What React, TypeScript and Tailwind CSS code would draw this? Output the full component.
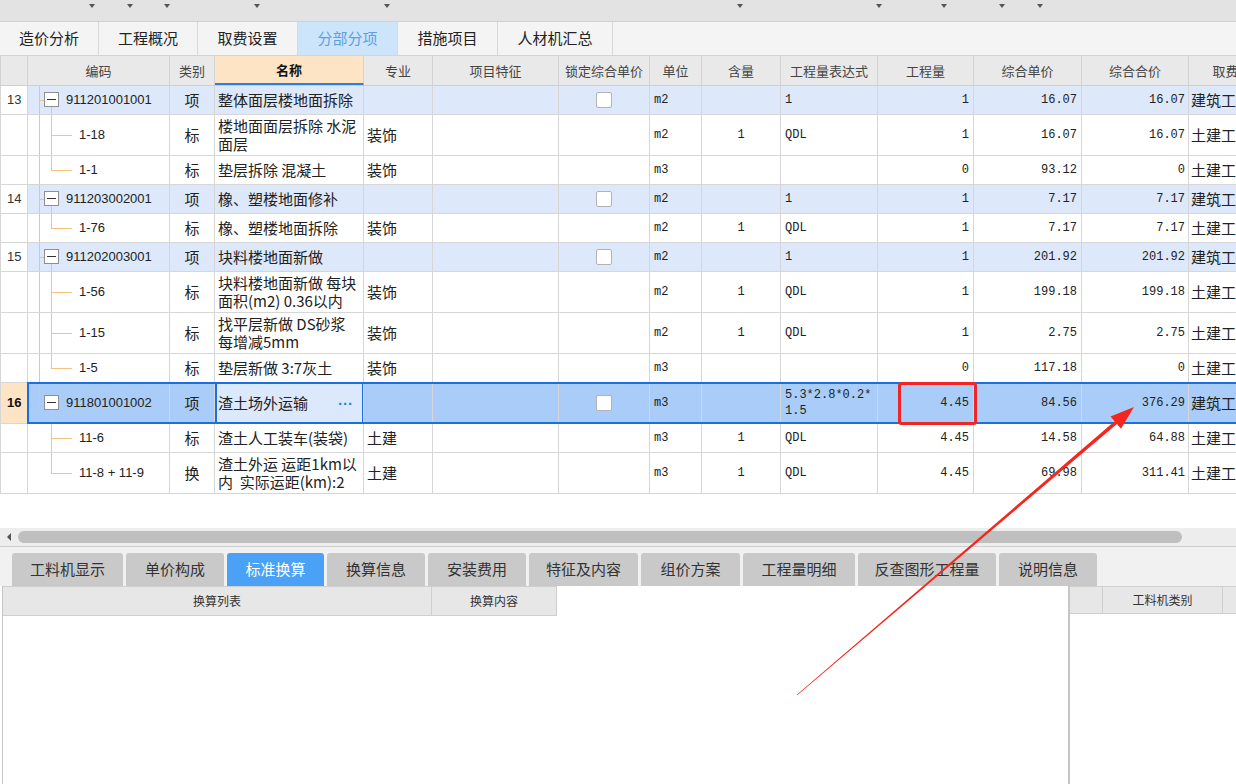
import React from "react";

type Row = {
  num?: string;
  code: string;
  kind: string;
  name: string[];
  spec?: string;
  unit: string;
  qty?: string;
  expr?: string[];
  amt: string;
  price: string;
  total: string;
  fee: string;
  parent?: boolean;
  selected?: boolean;
  tall?: boolean;
  last?: boolean;
  noTrunk?: boolean;
};

const rows: Row[] = [
  { num: "13", code: "911201001001", kind: "项", name: ["整体面层楼地面拆除"], unit: "m2", expr: ["1"], amt: "1", price: "16.07", total: "16.07", fee: "建筑工程", parent: true },
  { code: "1-18", kind: "标", name: ["楼地面面层拆除 水泥", "面层"], spec: "装饰", unit: "m2", qty: "1", expr: ["QDL"], amt: "1", price: "16.07", total: "16.07", fee: "土建工程", tall: true },
  { code: "1-1", kind: "标", name: ["垫层拆除 混凝土"], spec: "装饰", unit: "m3", amt: "0", price: "93.12", total: "0", fee: "土建工程", last: true },
  { num: "14", code: "911203002001", kind: "项", name: ["橡、塑楼地面修补"], unit: "m2", expr: ["1"], amt: "1", price: "7.17", total: "7.17", fee: "建筑工程", parent: true },
  { code: "1-76", kind: "标", name: ["橡、塑楼地面拆除"], spec: "装饰", unit: "m2", qty: "1", expr: ["QDL"], amt: "1", price: "7.17", total: "7.17", fee: "土建工程", last: true },
  { num: "15", code: "911202003001", kind: "项", name: ["块料楼地面新做"], unit: "m2", expr: ["1"], amt: "1", price: "201.92", total: "201.92", fee: "建筑工程", parent: true },
  { code: "1-56", kind: "标", name: ["块料楼地面新做 每块", "面积(m2) 0.36以内"], spec: "装饰", unit: "m2", qty: "1", expr: ["QDL"], amt: "1", price: "199.18", total: "199.18", fee: "土建工程", tall: true },
  { code: "1-15", kind: "标", name: ["找平层新做 DS砂浆", "每增减5mm"], spec: "装饰", unit: "m2", qty: "1", expr: ["QDL"], amt: "1", price: "2.75", total: "2.75", fee: "土建工程", tall: true },
  { code: "1-5", kind: "标", name: ["垫层新做 3:7灰土"], spec: "装饰", unit: "m3", amt: "0", price: "117.18", total: "0", fee: "土建工程", last: true },
  { num: "16", code: "911801001002", kind: "项", name: ["渣土场外运输"], unit: "m3", expr: ["5.3*2.8*0.2*", "1.5"], amt: "4.45", price: "84.56", total: "376.29", fee: "建筑工程", parent: true, selected: true, tall: true },
  { code: "11-6", kind: "标", name: ["渣土人工装车(装袋)"], spec: "土建", unit: "m3", qty: "1", expr: ["QDL"], amt: "4.45", price: "14.58", total: "64.88", fee: "土建工程", noTrunk: true },
  { code: "11-8 + 11-9", kind: "换", name: ["渣土外运 运距1km以", "内  实际运距(km):2"], spec: "土建", unit: "m3", qty: "1", expr: ["QDL"], amt: "4.45", price: "69.98", total: "311.41", fee: "土建工程", tall: true, last: true, noTrunk: true },
];

const headers: [string, string][] = [
  ["w-[28px]", ""],
  ["w-[142px]", "编码"],
  ["w-[45px]", "类别"],
  ["w-[149px]", "名称"],
  ["w-[69px]", "专业"],
  ["w-[126px]", "项目特征"],
  ["w-[91px]", "锁定综合单价"],
  ["w-[52px]", "单位"],
  ["w-[79px]", "含量"],
  ["w-[97px]", "工程量表达式"],
  ["w-[96px]", "工程量"],
  ["w-[108px]", "综合单价"],
  ["w-[107px]", "综合合价"],
  ["w-[100px]", "取费专业"],
];

const topTabs = [
  ["w-[99px]", "造价分析"],
  ["w-[99px]", "工程概况"],
  ["w-[100px]", "取费设置"],
  ["w-[100px]", "分部分项"],
  ["w-[100px]", "措施项目"],
  ["w-[115px]", "人材机汇总"],
];

const bottomTabs = [
  ["w-[111px]", "工料机显示"],
  ["w-[98px]", "单价构成"],
  ["w-[97px]", "标准换算"],
  ["w-[98px]", "换算信息"],
  ["w-[98px]", "安装费用"],
  ["w-[109px]", "特征及内容"],
  ["w-[99px]", "组价方案"],
  ["w-[112px]", "工程量明细"],
  ["w-[138px]", "反查图形工程量"],
  ["w-[98px]", "说明信息"],
];

const mono = "font-['Liberation_Mono','Noto_Sans_CJK_SC',monospace] text-[12px]";
const line = "bg-[#f5c381]";

const Cell = ({ w, className = "", children }: { w: string; className?: string; children?: React.ReactNode }) => (
  <div className={`${w} shrink-0 h-full border-r border-[#d6d6d6] flex items-center overflow-hidden whitespace-nowrap ${className}`}>
    {children}
  </div>
);

function CodeCell({ r, bg }: { r: Row; bg: string }) {
  return (
    <div className={`relative w-[142px] shrink-0 h-full border-r border-[#d6d6d6] flex items-center ${bg} ${r.parent ? "pl-[38px]" : "pl-[51px]"} font-['Liberation_Sans',sans-serif] text-[13px] text-[#222] whitespace-pre`}>
      {!r.noTrunk && !r.selected && <div className={`absolute left-[11px] top-0 bottom-0 w-px ${line}`} />}
      {r.selected && <div className={`absolute left-[11px] top-0 h-1/2 w-px ${line}`} />}
      {r.parent ? (
        <>
          <div className={`absolute left-[11px] top-1/2 w-[5px] h-px ${line}`} />
          <div className={`absolute left-[23px] top-1/2 bottom-0 w-px ${line}`} />
          <div className="absolute left-[16px] top-1/2 -mt-[8px] w-[15px] h-[15px] border border-[#8f8f8f] bg-white flex items-center justify-center">
            <div className="w-[9px] h-px bg-[#333]" />
          </div>
        </>
      ) : (
        <>
          <div className={`absolute left-[23px] top-0 w-px ${line} ${r.last ? "h-1/2" : "bottom-0"}`} />
          <div className={`absolute left-[23px] top-1/2 w-[21px] h-px ${line}`} />
        </>
      )}
      <span>{r.code}</span>
    </div>
  );
}

function TableRow({ r }: { r: Row }) {
  const bg = r.selected ? "bg-[#a9cdf8]" : r.parent ? "bg-[#dde9fb]" : "bg-white";
  const h = r.tall ? "h-[41px]" : "h-[29px]";
  const cn = "font-['Noto_Sans_CJK_SC',sans-serif] text-[15px] text-[#222]";
  return (
    <div className={`relative flex ${h} border-b border-[#d6d6d6]`}>
      <Cell w="w-[28px]" className={`border-l pl-[6px] font-['Liberation_Sans',sans-serif] text-[13px] ${r.selected ? "bg-[#fde4c4] font-bold text-[#111]" : "bg-white text-[#333]"}`}>
        {r.num}
      </Cell>
      <CodeCell r={r} bg={bg} />
      <Cell w="w-[45px]" className={`${bg} ${cn} justify-center`}>{r.kind}</Cell>
      <Cell w="w-[149px]" className={`relative ${r.selected ? "bg-[#dce9fc]" : bg} ${cn} pl-[3px]`}>
        <div className="flex flex-col leading-[18px]">
          {r.name.map((t, i) => (
            <span key={i} className="whitespace-pre">{t}</span>
          ))}
        </div>
        {r.selected && (
          <>
            <span className="ml-auto mr-[10px] font-['Liberation_Sans',sans-serif] text-[#2f7fe0] text-[15px] font-bold leading-none">···</span>
            <div className="absolute -top-px -bottom-px left-0 right-[-1px] border-2 border-[#1c6fe3] pointer-events-none" />
          </>
        )}
      </Cell>
      <Cell w="w-[69px]" className={`${bg} ${cn} pl-[3px]`}>{r.spec}</Cell>
      <Cell w="w-[126px]" className={bg} />
      <Cell w="w-[91px]" className={`${bg} justify-center`}>
        {r.parent && <div className="w-[16px] h-[16px] rounded-[2px] border border-[#b3b3b3] bg-white" />}
      </Cell>
      <Cell w="w-[52px]" className={`${bg} ${mono} pl-[4px] text-[#222]`}>{r.unit}</Cell>
      <Cell w="w-[79px]" className={`${bg} ${mono} justify-center text-[#222]`}>{r.qty}</Cell>
      <Cell w="w-[97px]" className={`${bg} ${mono} pl-[4px] text-[#222]`}>
        <div className="flex flex-col leading-[16px]">
          {(r.expr ?? []).map((t, i) => (
            <span key={i}>{t}</span>
          ))}
        </div>
      </Cell>
      <Cell w="w-[96px]" className={`${bg} ${mono} justify-end pr-[4px] text-[#222]`}>{r.amt}</Cell>
      <Cell w="w-[108px]" className={`${bg} ${mono} justify-end pr-[4px] text-[#222]`}>{r.price}</Cell>
      <Cell w="w-[107px]" className={`${bg} ${mono} justify-end pr-[3px] text-[#222]`}>{r.total}</Cell>
      <Cell w="w-[100px]" className={`${bg} ${cn} pl-[2px]`}>{r.fee}</Cell>
      {r.selected && (
        <div className="absolute -top-px -bottom-px left-[27px] right-0 border-2 border-[#1c6fe3] pointer-events-none" />
      )}
    </div>
  );
}

export default function App() {
  return (
    <div className="relative w-[1236px] h-[784px] overflow-hidden bg-white font-['Noto_Sans_CJK_SC',sans-serif] select-none">
      {/* toolbar strip */}
      <div className="h-[22px] bg-[#e3e3e3] border-b border-[#d0d0d0] flex items-start pt-[4px]">
        <span className="ml-[89px] w-0 h-0 border-l-[3px] border-r-[3px] border-t-[4px] border-l-transparent border-r-transparent border-t-[#555]" />
        <span className="ml-[32px] w-0 h-0 border-l-[3px] border-r-[3px] border-t-[4px] border-l-transparent border-r-transparent border-t-[#555]" />
        <span className="ml-[31px] w-0 h-0 border-l-[3px] border-r-[3px] border-t-[4px] border-l-transparent border-r-transparent border-t-[#555]" />
        <span className="ml-[84px] w-0 h-0 border-l-[3px] border-r-[3px] border-t-[4px] border-l-transparent border-r-transparent border-t-[#555]" />
        <span className="ml-[124px] w-0 h-0 border-l-[3px] border-r-[3px] border-t-[4px] border-l-transparent border-r-transparent border-t-[#555]" />
        <span className="ml-[347px] w-0 h-0 border-l-[3px] border-r-[3px] border-t-[4px] border-l-transparent border-r-transparent border-t-[#555]" />
        <span className="ml-[133px] w-0 h-0 border-l-[3px] border-r-[3px] border-t-[4px] border-l-transparent border-r-transparent border-t-[#555]" />
        <span className="ml-[59px] w-0 h-0 border-l-[3px] border-r-[3px] border-t-[4px] border-l-transparent border-r-transparent border-t-[#555]" />
        <span className="ml-[52px] w-0 h-0 border-l-[3px] border-r-[3px] border-t-[4px] border-l-transparent border-r-transparent border-t-[#555]" />
        <span className="ml-[32px] w-0 h-0 border-l-[3px] border-r-[3px] border-t-[4px] border-l-transparent border-r-transparent border-t-[#555]" />
      </div>

      {/* page tabs */}
      <div className="h-[34px] flex bg-[#f4f4f4] border-b border-[#d4d4d4]">
        {topTabs.map(([w, t]) => (
          <div
            key={t}
            className={`${w} h-full border-r border-[#d9d9d9] flex items-center justify-center text-[15px] ${t === "分部分项" ? "bg-[#cde5fa] text-[#5c9fe6]" : "text-[#222]"}`}
          >
            {t}
          </div>
        ))}
      </div>

      {/* grid */}
      <div className="w-[1236px] overflow-hidden">
        <div className="w-max">
          <div className="flex h-[30px] border-b border-[#cfcfcf] bg-[#e9e9e9]">
            {headers.map(([w, t], i) => (
              <div
                key={i}
                className={`${w} shrink-0 h-full border-r border-[#d2d2d2] flex items-center justify-center text-[13px] whitespace-nowrap ${i === 0 ? "border-l" : ""} ${t === "名称" ? "bg-[#fde4c4] font-bold text-[#111] border-b-2 border-b-[#2b7de0]" : "text-[#444]"}`}
              >
                {t}
              </div>
            ))}
          </div>
          {rows.map((r) => (
            <TableRow key={r.code} r={r} />
          ))}
        </div>
      </div>

      <div className="h-[34px] bg-white" />

      {/* horizontal scrollbar */}
      <div className="h-[19px] bg-[#ededed] border-b border-[#cfcfcf] flex items-center">
        <div className="w-[18px] flex justify-center">
          <span className="w-0 h-0 border-t-[4px] border-b-[4px] border-r-[4px] border-t-transparent border-b-transparent border-r-[#555]" />
        </div>
        <div className="w-[1164px] h-[12px] rounded-full bg-[#bfbfbf]" />
      </div>

      {/* bottom tabs */}
      <div className="h-[39px] bg-[#f1f1f1] flex items-end pl-[12px] gap-[3px]">
        {bottomTabs.map(([w, t]) => (
          <div
            key={t}
            className={`${w} h-[33px] rounded-t-[3px] flex items-center justify-center text-[15px] ${t === "标准换算" ? "bg-[#4ba1f6] text-white" : "bg-[#c9c9c9] text-[#333]"}`}
          >
            {t}
          </div>
        ))}
      </div>

      {/* bottom panels */}
      <div className="flex h-[198px]">
        <div className="ml-[2px] w-[1066px] border-l border-[#c6c6c6] bg-white">
          <div className="flex h-[30px] text-[12px] text-[#333]">
            <div className="w-[429px] bg-[#e7e7e7] border-r border-b border-t border-[#cfcfcf] flex items-center justify-center">换算列表</div>
            <div className="w-[125px] bg-[#e7e7e7] border-r border-b border-t border-[#cfcfcf] flex items-center justify-center">换算内容</div>
          </div>
        </div>
        <div className="w-[2px] bg-[#c6c6c6]" />
        <div className="flex-1 bg-white">
          <div className="flex h-[28px] text-[12px] text-[#333] bg-[#e7e7e7] border-b border-t border-[#cfcfcf]">
            <div className="w-[33px] border-r border-[#cfcfcf]" />
            <div className="w-[120px] border-r border-[#cfcfcf] flex items-center justify-center">工料机类别</div>
          </div>
        </div>
      </div>

      {/* annotation overlay */}
      <svg className="absolute left-0 top-0 pointer-events-none" width="1236" height="784" viewBox="0 0 1236 784">
        <rect x="899.5" y="383.5" width="76" height="40" rx="2" fill="none" stroke="#f02626" strokeWidth="3" />
        <polygon
          fill="#f5261c"
          points="1134,407 1120.95,428.67 1116.92,423.96 797.2,695.23 796.8,694.77 1114.58,421.22 1110.55,416.51"
        />
      </svg>
    </div>
  );
}
